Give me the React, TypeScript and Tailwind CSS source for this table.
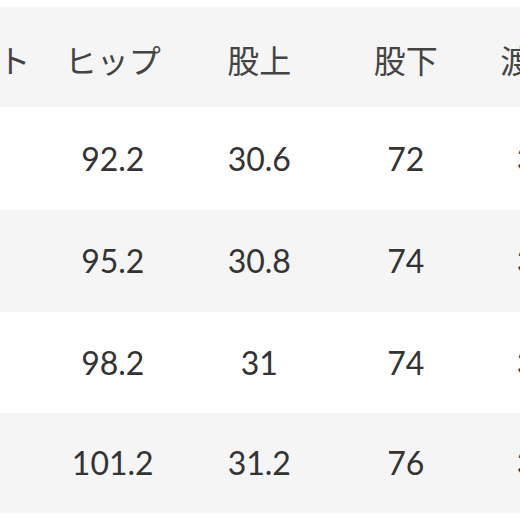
import React from "react";

const headers = ["ウエスト", "ヒップ", "股上", "股下", "渡り幅"];
const rows = [
  { h: "h-[103px]", bg: "bg-white", cells: ["76", "92.2", "30.6", "72", "31.5"] },
  { h: "h-[102px]", bg: "bg-[#f5f5f5]", cells: ["79", "95.2", "30.8", "74", "32.5"] },
  { h: "h-[101px]", bg: "bg-white", cells: ["82", "98.2", "31", "74", "33.5"] },
  { h: "h-[100px]", bg: "bg-[#f5f5f5]", cells: ["85", "101.2", "31.2", "76", "34.5"] },
];

function cellClass(j: number) {
  return j === 4
    ? "w-[146.5px] shrink-0 text-center whitespace-nowrap ml-[-4px]"
    : "w-[146.5px] shrink-0 text-center whitespace-nowrap";
}

export default function App() {
  return (
    <div className="w-[520px] h-[520px] overflow-hidden bg-white">
      <div className="h-[7px] bg-white" />
      <div
        className="h-[100px] bg-[#f5f5f5] flex items-center ml-[-107px] text-[#444] text-[32px] leading-none"
        style={{ fontFamily: '"Noto Sans CJK JP", sans-serif' }}
      >
        {headers.map((t, j) => (
          <div key={t} className={`${cellClass(j)} pt-[3px]`}>
            {t}
          </div>
        ))}
      </div>
      {rows.map((r, i) => (
        <div
          key={i}
          className={`${r.h} ${r.bg} flex items-center ml-[-107px] text-[#333] text-[32px] leading-none`}
          style={{ fontFamily: 'Lato, "Noto Sans CJK JP", sans-serif' }}
        >
          {r.cells.map((c, j) => (
            <div key={j} className={cellClass(j)}>
              {c}
            </div>
          ))}
        </div>
      ))}
    </div>
  );
}
